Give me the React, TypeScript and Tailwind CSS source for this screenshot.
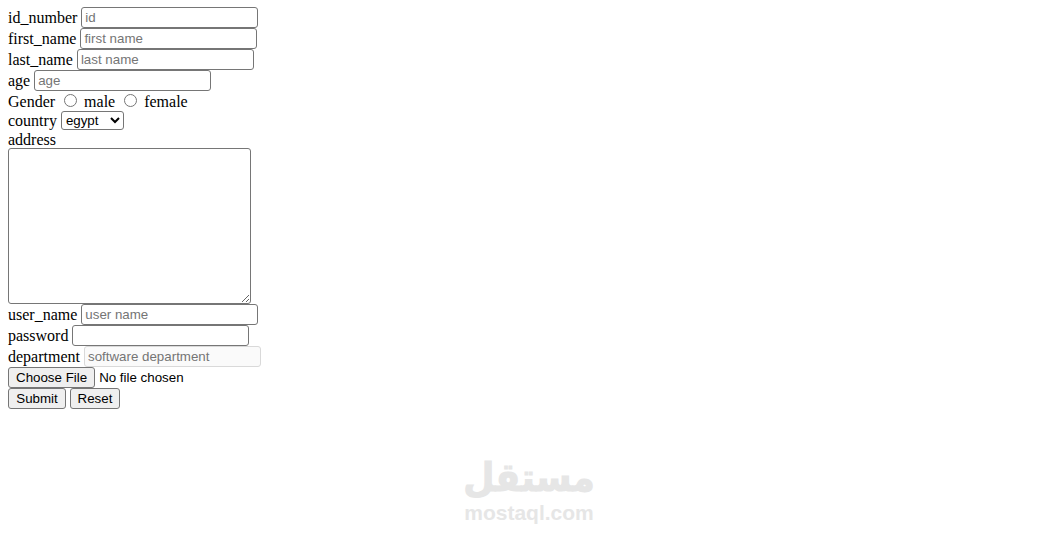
const inputCls =
  "w-[177px] h-[21px] align-[1px] border border-[#767676] rounded-[3px] px-[3px] py-px bg-white text-[13.33px] font-['Liberation_Sans',Arial,sans-serif] placeholder:text-[#757575] outline-none"
const btnCls =
  "h-[21px] border border-[#767676] rounded-[3px] bg-[#efefef] text-[13.33px] text-black font-['Liberation_Sans',Arial,sans-serif]"

export default function App() {
  return (
    <div className="relative min-h-[534px] bg-white px-2 pt-[7px] pb-2 text-base leading-[normal] text-black font-['Liberation_Serif','Times_New_Roman',serif]">
      <form>
        <label>id_number </label>
        <input type="text" placeholder="id" className={inputCls} />
        <br />
        <label>first_name </label>
        <input type="text" placeholder="first name" className={inputCls} />
        <br />
        <label>last_name </label>
        <input type="text" placeholder="last name" className={inputCls} />
        <br />
        <label>age </label>
        <input type="text" placeholder="age" className={inputCls} />
        <br />
        <label>Gender </label>
        <input type="radio" name="gender" className="mt-[3px] mr-[3px] ml-[5px]" />
        <label> male </label>
        <input type="radio" name="gender" className="mt-[3px] mr-[3px] ml-[5px]" />
        <label> female</label>
        <br />
        <label>country </label>
        <select className="w-[63px] h-[19px] align-[1px] border border-[#767676] rounded-[3px] bg-white text-[13.33px] font-['Liberation_Sans',Arial,sans-serif]">
          <option>egypt</option>
        </select>
        <br />
        <label className="block h-[18px] pt-px">address</label>
        <textarea className="block w-[243px] h-[156px] border border-[#767676] rounded-[3px] px-[2px] py-px bg-white outline-none" />
        <label>user_name </label>
        <input type="text" placeholder="user name" className={inputCls} />
        <br />
        <label>password </label>
        <input type="password" className={inputCls} />
        <br />
        <label>department </label>
        <input
          type="text"
          disabled
          placeholder="software department"
          className="w-[177px] h-[21px] align-[1px] border border-[#d9d9d9] rounded-[3px] px-[3px] py-px bg-[#fafafa] text-[13.33px] font-['Liberation_Sans',Arial,sans-serif] placeholder:text-[#757575]"
        />
        <br />
        <input
          type="file"
          className="text-[13.33px] font-['Liberation_Sans',Arial,sans-serif] file:h-[21px] file:border file:border-solid file:border-[#767676] file:rounded-[3px] file:px-[7px] file:bg-[#efefef]"
        />
        <br />
        <button type="submit" className={`w-[58px] ${btnCls}`}>Submit</button>{" "}
        <button type="reset" className={`w-[50px] ${btnCls}`}>Reset</button>
      </form>

      {/* watermark */}
      <div className="absolute left-[465px] top-[455px] w-[128px] flex flex-col items-center text-[#e6e6e6] font-bold font-['DejaVu_Sans',sans-serif]">
        <span dir="rtl" lang="ar" className="text-[36px] leading-[46px] scale-y-[1.1] [-webkit-text-stroke:1px_#e6e6e6]">مستقل</span>
        <span className="text-[21px] leading-[24px] font-['Liberation_Sans',Arial,sans-serif]">mostaql.com</span>
      </div>
    </div>
  )
}
